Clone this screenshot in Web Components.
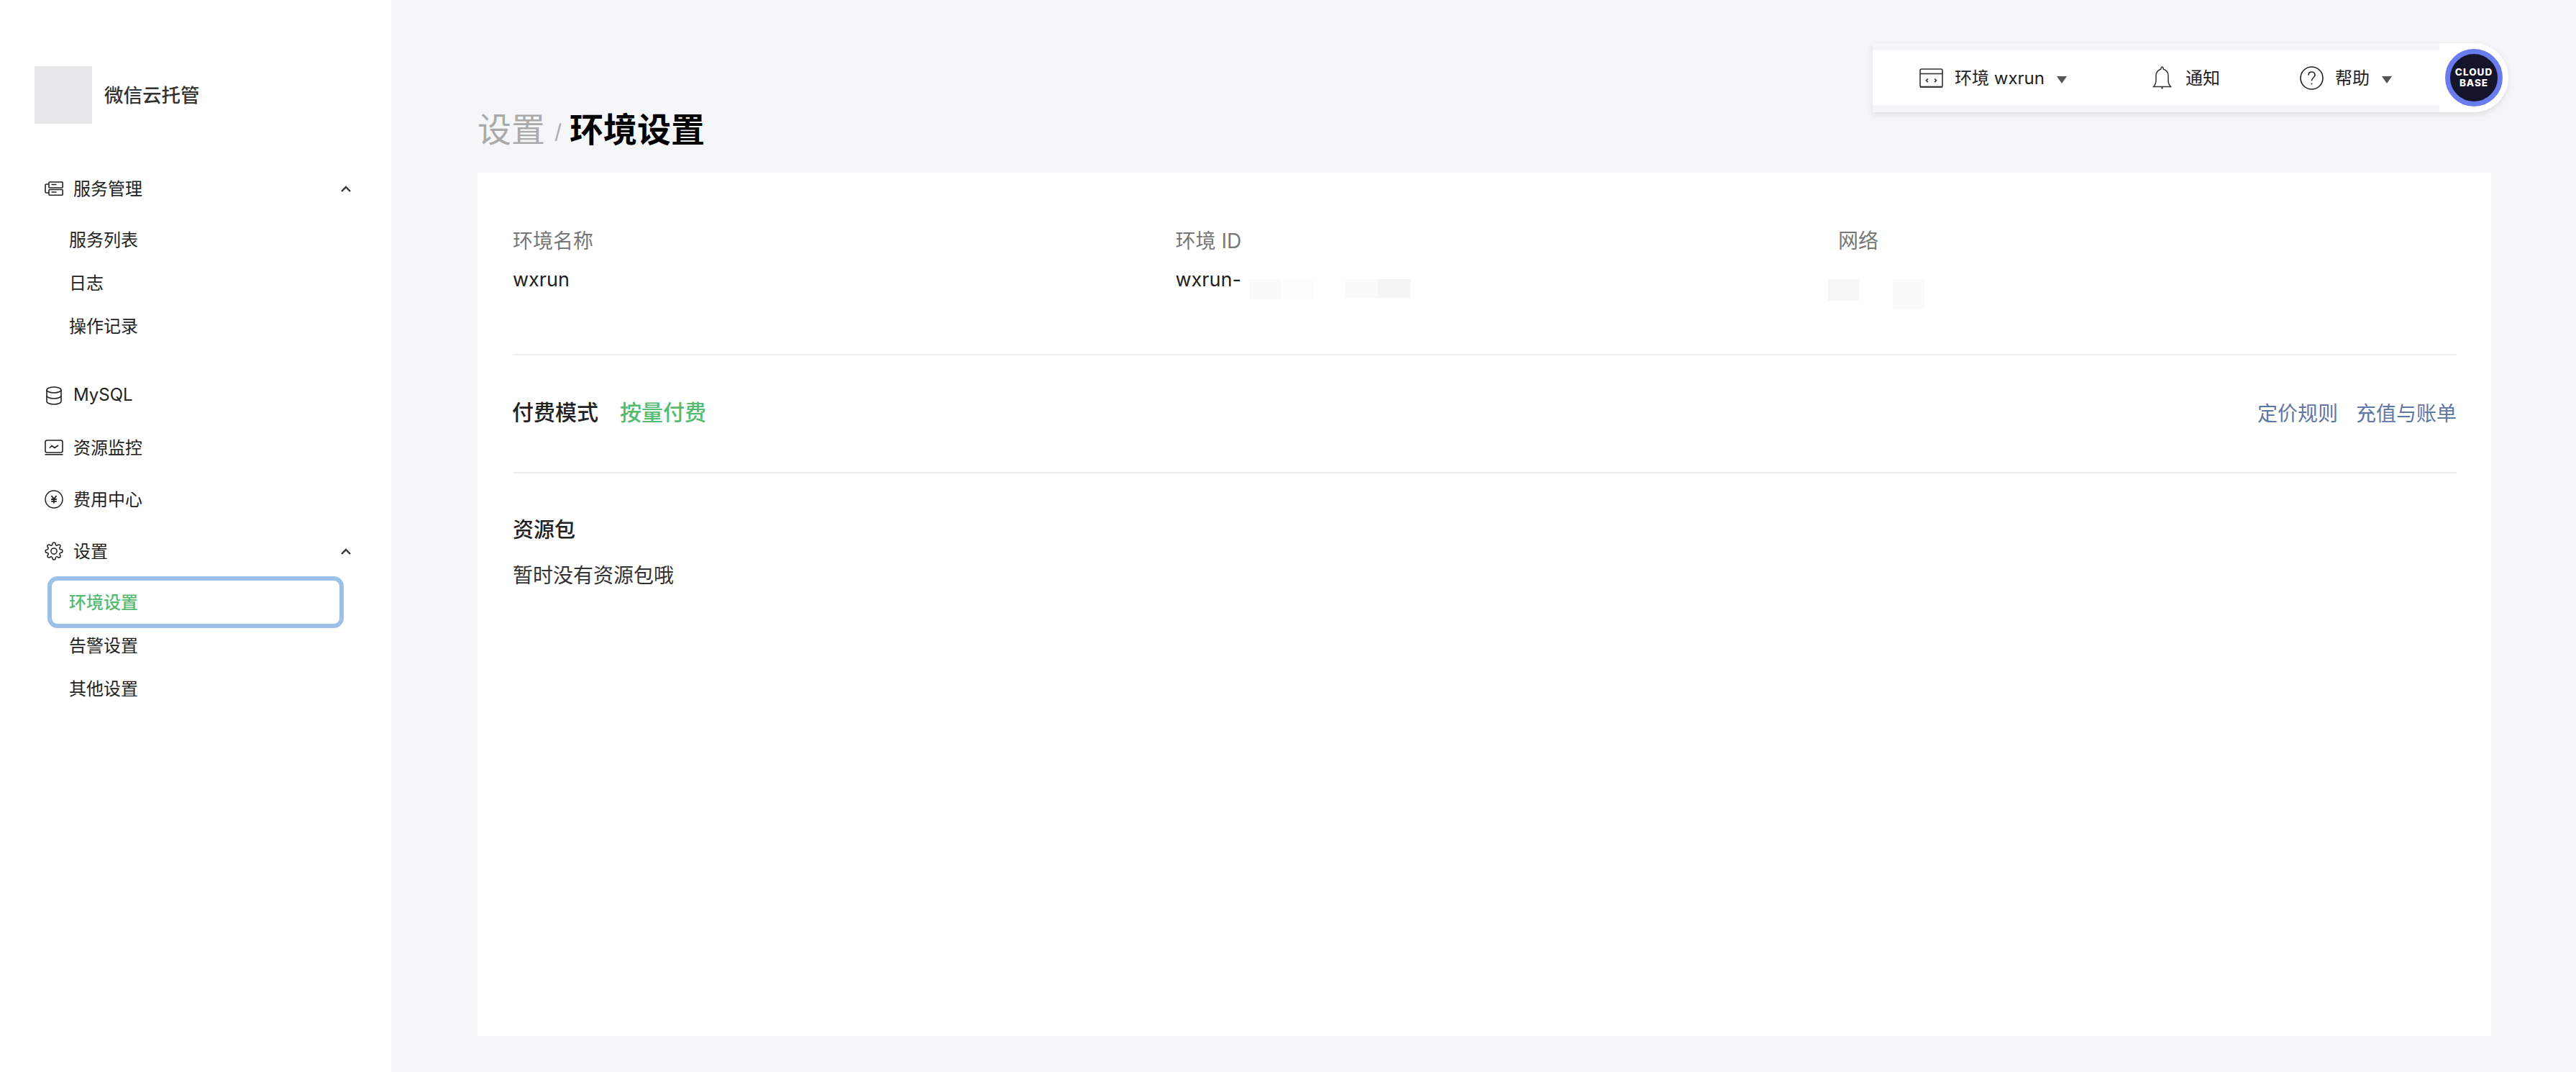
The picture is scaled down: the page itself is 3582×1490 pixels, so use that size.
<!DOCTYPE html>
<html lang="zh-CN">
<head>
<meta charset="utf-8">
<title>微信云托管</title>
<style>
  html, body { margin: 0; height: 100%; }
  body {
    background: #f5f6f8;
    font-family: Inter, "Noto Sans CJK SC", sans-serif;
    color: #222;
  }
</style>
</head>
<body>
<app-shell>
  <side-nav slot="side">
    <nav-group label="服务管理" icon="server" open>
      <nav-sub>服务列表</nav-sub>
      <nav-sub>日志</nav-sub>
      <nav-sub>操作记录</nav-sub>
    </nav-group>
    <nav-group label="MySQL" icon="db"></nav-group>
    <nav-group label="资源监控" icon="monitor"></nav-group>
    <nav-group label="费用中心" icon="yen"></nav-group>
    <nav-group label="设置" icon="gear" open>
      <nav-sub active>环境设置</nav-sub>
      <nav-sub>告警设置</nav-sub>
      <nav-sub>其他设置</nav-sub>
    </nav-group>
  </side-nav>
  <top-bar slot="top"></top-bar>
  <page-title parent="设置" current="环境设置"></page-title>
  <env-card></env-card>
</app-shell>

<script>
  const ICONS = {
    server: `<svg width="26" height="20" viewBox="0 0 26 20" fill="none" stroke="#222" stroke-width="1.6">
      <path d="M6 4H2.500A1.500 1.500 0 0 0 1 5.500v9A1.500 1.500 0 0 0 2.500 16H6"/>
      <rect x="6" y="1" width="19.200" height="8" rx="1"/><rect x="6" y="11.500" width="19.200" height="7.700" rx="1"/>
      <path d="M9.500 4.500h7M9.500 15h7"/></svg>`,
    db: `<svg width="22" height="26" viewBox="0 0 22 26" fill="none" stroke="#222" stroke-width="1.600">
      <ellipse cx="11" cy="5" rx="10" ry="4"/>
      <path d="M1 5v16c0 2.200 4.500 4 10 4s10-1.800 10-4V5"/>
      <path d="M1 13c0 2.200 4.500 4 10 4s10-1.800 10-4"/></svg>`,
    monitor: `<svg width="26" height="22" viewBox="0 0 26 22" fill="none" stroke="#222" stroke-width="1.600">
      <rect x="1" y="1" width="24" height="17" rx="2.500"/>
      <path d="M0.500 20.800h25"/>
      <path d="M7 11.500l3-3 4 3 5-3.500" stroke-width="1.700"/></svg>`,
    yen: `<svg width="26" height="26" viewBox="0 0 26 26" fill="none" stroke="#222" stroke-width="1.500">
      <circle cx="13" cy="13" r="12"/>
      <path d="M9.500 8L13 12.500 16.500 8M13 12.500V18.500M9.200 13h7.600M9.200 15.800h7.600" stroke-width="1.800"/></svg>`,
    gear: `<svg width="26" height="26" viewBox="0 0 24 24" fill="none" stroke="#222" stroke-width="1.400">
      <circle cx="12" cy="12" r="3.800"/>
      <path d="M19.400 15a1.650 1.650 0 0 0 .33 1.820l.06.06a2 2 0 0 1 0 2.830 2 2 0 0 1-2.830 0l-.06-.06a1.650 1.650 0 0 0-1.820-.33 1.650 1.650 0 0 0-1 1.510V21a2 2 0 0 1-2 2 2 2 0 0 1-2-2v-.09A1.650 1.650 0 0 0 9 19.400a1.650 1.650 0 0 0-1.820.33l-.06.06a2 2 0 0 1-2.830 0 2 2 0 0 1 0-2.830l.06-.06a1.650 1.650 0 0 0 .33-1.820 1.650 1.650 0 0 0-1.510-1H3a2 2 0 0 1-2-2 2 2 0 0 1 2-2h.09A1.650 1.650 0 0 0 4.600 9a1.650 1.650 0 0 0-.33-1.820l-.06-.06a2 2 0 0 1 0-2.830 2 2 0 0 1 2.830 0l.06.06a1.650 1.650 0 0 0 1.820.33H9a1.650 1.650 0 0 0 1-1.510V3a2 2 0 0 1 2-2 2 2 0 0 1 2 2v.09a1.650 1.650 0 0 0 1 1.510 1.650 1.650 0 0 0 1.820-.33l.06-.06a2 2 0 0 1 2.830 0 2 2 0 0 1 0 2.830l-.06.06a1.650 1.650 0 0 0-.33 1.820V9a1.650 1.650 0 0 0 1.510 1H21a2 2 0 0 1 2 2 2 2 0 0 1-2 2h-.09a1.650 1.650 0 0 0-1.510 1z"/></svg>`,
    env: `<svg width="33" height="27" viewBox="0 0 33 27" fill="none" stroke="#333" stroke-width="1.600">
      <path d="M1 25.500V3a2 2 0 0 1 2-2h27a2 2 0 0 1 2 2v22.500"/>
      <path d="M1 7.500h31"/><path d="M1 25.800h31" stroke-width="2.200"/>
      <path d="M11.800 14.500l-2.300 2.300 2.300 2.300M21.200 14.500l2.300 2.300-2.300 2.300" stroke-width="1.700"/></svg>`,
    bell: `<svg width="27" height="32" viewBox="0 0 27 32" fill="none" stroke="#333" stroke-width="1.500">
      <path d="M1.500 28.500h24c-2.500-2.500-3.500-5-3.500-9v-6c0-4.500-3-8-6.500-9.200C15 2 14.500 1 13.500 1s-1.500 1-2 3.300C8 5.500 5 9 5 13.500v6c0 4-1 6.500-3.500 9z"/>
      <path d="M13.500 29v2.500" stroke-width="2"/></svg>`,
    help: `<svg width="33" height="33" viewBox="0 0 33 33" fill="none" stroke="#222" stroke-width="1.600">
      <circle cx="16.500" cy="16.500" r="15.500"/>
      <path d="M12 12.500c0-2.800 2-4.500 4.500-4.500s4.500 1.700 4.500 4.200c0 3.800-4.500 3.800-4.500 8"/>
      <circle cx="16.500" cy="24.500" r="1" fill="#222" stroke="none"/></svg>`
  };

  class AppShell extends HTMLElement {
    constructor() {
      super();
      this.attachShadow({ mode: 'open' }).innerHTML = `
        <style>
          :host { display: flex; height: 100vh; position: relative; }
          aside { flex: 0 0 544px; background: #fff; }
          main {
            flex: 1; min-width: 0; box-sizing: border-box;
            display: flex; flex-direction: column;
            padding: 148px 118px 50px 120px;
          }
        </style>
        <aside><slot name="side"></slot></aside>
        <main><slot></slot></main>
        <slot name="top"></slot>`;
    }
  }

  class SideNav extends HTMLElement {
    constructor() {
      super();
      this.attachShadow({ mode: 'open' }).innerHTML = `
        <style>
          :host { display: block; padding-top: 92px; }
          .brand { display: flex; align-items: center; gap: 17px; padding-left: 48px; margin-bottom: 54px; }
          .logo { width: 80px; height: 80px; background: #e8e9eb; }
          .name { font-size: 26.500px; font-weight: 500; color: #333; padding-bottom: 4px; }
        </style>
        <div class="brand"><div class="logo"></div><div class="name">微信云托管</div></div>
        <slot></slot>`;
    }
  }

  class NavGroup extends HTMLElement {
    constructor() {
      super();
      this.attachShadow({ mode: 'open' });
    }

    connectedCallback() {
      const open = this.hasAttribute('open');
      this.shadowRoot.innerHTML = `
        <style>
          :host { display: block; }
          .head { display: flex; align-items: center; height: 72px; padding-left: 62px; font-size: 24px; color: #222; }
          .icon { flex: 0 0 26px; display: flex; justify-content: center; margin-right: 14px; }
          .label { flex: 1; padding-bottom: 4px; }
          .chev { margin-right: 56px; }
          .subs { padding: 5px 0 31px; }
        </style>
        <div class="head">
          <span class="icon">${ICONS[this.getAttribute('icon')]}</span>
          <span class="label">${this.getAttribute('label')}</span>
          ${open ? `<svg class="chev" width="14" height="9" viewBox="0 0 14 9" fill="none" stroke="#333" stroke-width="2.400"><path d="M1 8l6-6 6 6"/></svg>` : ''}
        </div>
        ${open ? '<div class="subs"><slot></slot></div>' : ''}`;
    }
  }

  class NavSub extends HTMLElement {
    constructor() {
      super();
      this.attachShadow({ mode: 'open' }).innerHTML = `
        <style>
          :host { display: flex; align-items: center; box-sizing: border-box; height: 60px; margin: 0 72px; padding: 0 0 4px 24px; font-size: 24px; color: #222; border-radius: 8px; }
          :host([active]) { color: #55bb70; font-weight: 500; box-shadow: 0 0 0 6px #9dc0e8; }
        </style>
        <slot></slot>`;
    }
  }

  class TopBar extends HTMLElement {
    constructor() {
      super();
      this.attachShadow({ mode: 'open' }).innerHTML = `
        <style>
          /* floats over the page, top right */
          :host {
            position: absolute; top: 60px; left: 2604px;
            display: flex; width: 884px; height: 96px;
            background: #fff; border-radius: 0 48px 48px 0;
            box-shadow: 0 3px 8px rgba(0,0,0,.1);
          }
          .tools { flex: 0 0 788px; box-sizing: border-box; padding: 10px 0; background: #f5f6f8; }
          .band { display: flex; align-items: center; height: 76px; padding-left: 65px; background: #fff; font-size: 24px; color: #222; }
          .item { display: flex; align-items: center; white-space: nowrap; }
          .item span { padding-bottom: 4px; }
          .tri { width: 0; height: 0; border: solid transparent; border-width: 10px 7.500px 0; border-top-color: #555; margin: 6px 0 0 17px; }
          .avatar {
            box-sizing: border-box; width: 80px; height: 80px; margin: 8px 0 0 8px;
            border-radius: 50%; border: 7px solid #6b7bee; background: #14142b; color: #fff;
            display: flex; align-items: center; justify-content: center; text-align: center;
            font: 800 13.500px/15px Inter, sans-serif; letter-spacing: 1px;
          }
        </style>
        <div class="tools"><div class="band">
          <div class="item">${ICONS.env}<span style="margin-left:16px">环境 wxrun</span><i class="tri"></i></div>
          <div class="item" style="margin-left:119px">${ICONS.bell}<span style="margin-left:19px">通知</span></div>
          <div class="item" style="margin-left:111px">${ICONS.help}<span style="margin-left:16px">帮助</span><i class="tri"></i></div>
        </div></div>
        <div class="avatar">CLOUD<br>BASE</div>`;
    }
  }

  class PageTitle extends HTMLElement {
    constructor() {
      super();
      this.attachShadow({ mode: 'open' });
    }

    connectedCallback() {
      this.shadowRoot.innerHTML = `
        <style>
          :host { display: flex; align-items: center; height: 64px; margin-bottom: 28px; font-size: 47px; line-height: 64px; }
          .parent { color: #aaa; }
          .sep { color: #aaa; font-size: 28px; margin: 6px 11px 0 13px; }
          .current { color: #000; font-weight: 700; }
        </style>
        <span class="parent">${this.getAttribute('parent')}</span>
        <span class="sep">/</span>
        <span class="current">${this.getAttribute('current')}</span>`;
    }
  }

  class InfoCell extends HTMLElement {
    constructor() {
      super();
      this.attachShadow({ mode: 'open' });
    }

    connectedCallback() {
      this.shadowRoot.innerHTML = `
        <style>
          :host { display: block; position: relative; font-size: 28px; line-height: 40px; }
          .label { color: #777; margin-top: 1px; margin-bottom: 14px; }
          .value { color: #222; min-height: 40px; font-size: 27px; }
        </style>
        <div class="label">${this.getAttribute('label')}</div>
        <div class="value">${this.getAttribute('value') || ''}</div>
        <slot></slot>`;
    }
  }

  // Smudge over a blanked-out value, lies on top of the cell
  class RedactPatch extends HTMLElement {
    constructor() {
      super();
      this.attachShadow({ mode: 'open' }).innerHTML = `
        <style>:host { display: block; position: absolute; top: 74px; }</style>`;
    }
  }

  class EnvCard extends HTMLElement {
    constructor() {
      super();
      this.attachShadow({ mode: 'open' }).innerHTML = `
        <style>
          :host { display: block; flex: 1; background: #fff; padding: 0 48px 0 49px; font-size: 28px; }
          .info { display: grid; grid-template-columns: 921.500px 921.500px 1fr; height: 178px; padding-top: 74px; border-bottom: 2px solid #eee; }
          .billing { display: flex; align-items: center; height: 162px; border-bottom: 2px solid #eee; }
          .billing b { font-size: 30px; font-weight: 500; color: #222; margin: -8px 0 0 -1px; }
          .billing em { font-style: normal; font-size: 30px; font-weight: 500; color: #55bb70; margin: -8px 0 0 30px; }
          .links { margin-left: auto; display: flex; gap: 25px; color: #5f77a3; padding-bottom: 4px; }
          .res { padding-top: 59px; }
          .res h3 { margin: 0 0 23px; font-size: 29px; font-weight: 500; line-height: 40px; color: #222; }
          .res p { margin: 0; line-height: 40px; color: #333; }
        </style>
        <div class="info">
          <info-cell label="环境名称" value="wxrun"></info-cell>
          <info-cell label="环境 ID" value="wxrun-">
            <redact-patch style="left:102px;width:89px;height:28px;background:linear-gradient(90deg,#fafafa 50%,#fdfdfd 50%)"></redact-patch>
            <redact-patch style="left:236px;width:90px;height:26px;background:linear-gradient(90deg,#fafafa 50%,#f5f5f5 50%)"></redact-patch>
          </info-cell>
          <info-cell label="网络">
            <redact-patch style="left:-14px;width:43px;height:30px;background:#f6f6f6"></redact-patch>
            <redact-patch style="left:76px;width:44px;height:42px;background:#fafafa"></redact-patch>
          </info-cell>
        </div>
        <div class="billing">
          <b>付费模式</b><em>按量付费</em>
          <div class="links"><span>定价规则</span><span>充值与账单</span></div>
        </div>
        <div class="res">
          <h3>资源包</h3>
          <p>暂时没有资源包哦</p>
        </div>`;
    }
  }

  customElements.define('app-shell', AppShell);
  customElements.define('side-nav', SideNav);
  customElements.define('nav-group', NavGroup);
  customElements.define('nav-sub', NavSub);
  customElements.define('top-bar', TopBar);
  customElements.define('page-title', PageTitle);
  customElements.define('info-cell', InfoCell);
  customElements.define('redact-patch', RedactPatch);
  customElements.define('env-card', EnvCard);
</script>
</body>
</html>
